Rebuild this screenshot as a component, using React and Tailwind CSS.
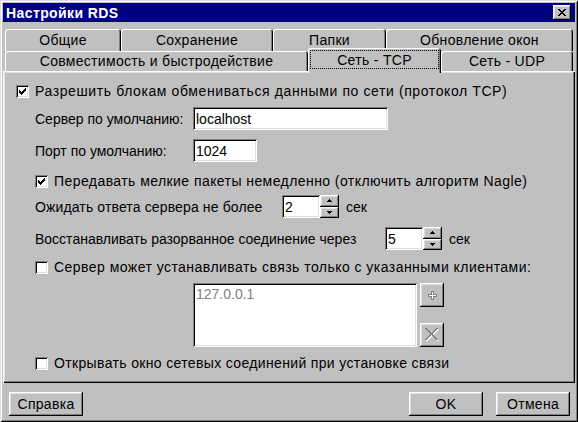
import React from "react";

const raised =
  "shadow-[inset_-1px_-1px_#000,inset_1px_1px_#fff,inset_-2px_-2px_#808080,inset_2px_2px_#dfdfdf]";
const sunken =
  "shadow-[inset_1px_1px_#808080,inset_-1px_-1px_#fff,inset_2px_2px_#000,inset_-2px_-2px_#dfdfdf]";
const tabShadow =
  "shadow-[inset_1px_1px_#fff,inset_-1px_0_#000,inset_-2px_0_#808080]";

function Pixels({ rows, colors }) {
  const w = rows[0].length;
  const h = rows.length;
  const rects = [];
  rows.forEach((r, y) =>
    [...r].forEach((c, x) => {
      if (colors[c])
        rects.push(
          <rect key={`${x}-${y}`} x={x} y={y} width="1" height="1" fill={colors[c]} />
        );
    })
  );
  return (
    <svg width={w} height={h} viewBox={`0 0 ${w} ${h}`} shapeRendering="crispEdges">
      {rects}
    </svg>
  );
}

const CHECK = [
  "......k",
  ".....kk",
  "k...kkk",
  "kk.kkk.",
  "kkkkk..",
  ".kkk...",
  "..k....",
];

const CLOSE = [
  "kk....kk",
  ".kk..kk.",
  "..kkkk..",
  "...kk...",
  "..kkkk..",
  ".kk..kk.",
  "kk....kk",
];

const UP = ["..k..", ".kkk.", "kkkkk"];
const DOWN = ["kkkkk", ".kkk.", "..k.."];

const PLUS = [
  "...ggg...",
  "...gwg...",
  "...gwg...",
  "ggggwgggg",
  "gwwwwwwwg",
  "ggggwgggg",
  "...gwg...",
  "...gwg...",
  "...ggg...",
];

const K = { k: "#000" };

function Check({ checked }) {
  return (
    <span className={`w-[13px] h-[13px] shrink-0 bg-white flex items-center justify-center ${sunken}`}>
      {checked && <Pixels rows={CHECK} colors={K} />}
    </span>
  );
}

function XIcon() {
  const rects = [];
  for (let i = 0; i < 12; i++) {
    rects.push(<rect key={`w1${i}`} x={i + 1} y={i + 1} width="2" height="1" fill="#fff" />);
    rects.push(<rect key={`w2${i}`} x={12 - i} y={i + 1} width="2" height="1" fill="#fff" />);
  }
  for (let i = 0; i < 12; i++) {
    rects.push(<rect key={`g1${i}`} x={i} y={i} width="2" height="1" fill="#808080" />);
    rects.push(<rect key={`g2${i}`} x={11 - i} y={i} width="2" height="1" fill="#808080" />);
  }
  return (
    <svg width="15" height="14" viewBox="0 0 15 14" shapeRendering="crispEdges">
      {rects}
    </svg>
  );
}

function Field({ w, h = "h-[23px]", children, muted }) {
  return (
    <div className={`${w} ${h} bg-white ${sunken} flex items-center pl-[3px] ${muted ? "text-[#808080]" : ""}`}>
      {children}
    </div>
  );
}

function Spin({ w, value }) {
  return (
    <div className="flex h-[23px]">
      <Field w={w}>{value}</Field>
      <div className="w-[19px] h-full flex flex-col">
        <div className={`flex-1 ${raised} flex items-center justify-center`}>
          <Pixels rows={UP} colors={K} />
        </div>
        <div className={`flex-1 ${raised} flex items-center justify-center`}>
          <Pixels rows={DOWN} colors={K} />
        </div>
      </div>
    </div>
  );
}

function Tab({ w, h, children }) {
  return (
    <div className={`${w} ${h} shrink-0 flex items-center justify-center rounded-t-[3px] tracking-[0.3px] ${tabShadow}`}>
      {children}
    </div>
  );
}

function Button({ children }) {
  return (
    <div className={`w-[74px] h-[24px] flex items-center justify-center tracking-[0.3px] ${raised}`}>{children}</div>
  );
}

export default function App() {
  return (
    <div
      className={`w-[578px] h-[422px] bg-[#c0c0c0] p-[3px] flex flex-col text-[14px] leading-[16px] text-black font-['Liberation_Sans',Arial,sans-serif] shadow-[inset_1px_1px_#dfdfdf,inset_-1px_-1px_#000,inset_2px_2px_#fff,inset_-2px_-2px_#808080]`}
    >
      {/* Title bar */}
      <div className="h-[19px] shrink-0 bg-[#000080] flex items-center pl-[3px] pr-[4px]">
        <span className="text-white font-bold tracking-[0.4px]">Настройки RDS</span>
        <div className={`ml-auto w-[18px] h-[15px] bg-[#c0c0c0] ${raised} flex items-center justify-center`}>
          <Pixels rows={CLOSE} colors={K} />
        </div>
      </div>

      {/* Tabs row 1 */}
      <div className="mt-[7px] h-[22px] shrink-0 flex mx-[2px]">
        <Tab w="w-[116px]" h="h-[22px]">Общие</Tab>
        <Tab w="w-[152px]" h="h-[22px]">Сохранение</Tab>
        <Tab w="w-[113px]" h="h-[22px]">Папки</Tab>
        <Tab w="w-[187px]" h="h-[22px]">Обновление окон</Tab>
      </div>

      {/* Tabs row 2 */}
      <div className="h-[20px] shrink-0 flex items-end mx-[2px]">
        <Tab w="w-[303px]" h="h-[20px]">Совместимость и быстродействие</Tab>
        <div
          className={`relative z-10 w-[133px] h-[25px] -mb-[2px] shrink-0 bg-[#c0c0c0] rounded-t-[3px] px-[2px] pt-[2px] pb-[4px] flex tracking-[0.3px] ${tabShadow}`}
        >
          <div className="flex-1 flex items-center justify-center border border-dotted border-black">
            Сеть - TCP
          </div>
        </div>
        <Tab w="w-[132px]" h="h-[20px]">Сеть - UDP</Tab>
      </div>

      {/* Panel */}
      <div
        className={`h-[312px] shrink-0 flex flex-col pt-[11px] shadow-[inset_1px_1px_#fff,inset_-1px_-1px_#000,inset_-2px_-2px_#808080,inset_2px_2px_#dfdfdf]`}
      >
        <div className="h-[18px] flex items-center pl-[13px]">
          <Check checked />
          <span className="ml-[6px] tracking-[0.6px]">Разрешить блокам обмениваться данными по сети (протокол TCP)</span>
        </div>

        <div className="mt-[7px] h-[23px] flex items-center pl-[32px]">
          <span className="w-[158px]">Сервер по умолчанию:</span>
          <Field w="w-[195px]">localhost</Field>
        </div>

        <div className="mt-[9px] h-[23px] flex items-center pl-[32px]">
          <span className="w-[158px]">Порт по умолчанию:</span>
          <Field w="w-[64px]">1024</Field>
        </div>

        <div className="mt-[10px] h-[18px] flex items-center pl-[32px]">
          <Check checked />
          <span className="ml-[6px] tracking-[0.43px]">Передавать мелкие пакеты немедленно (отключить алгоритм Nagle)</span>
        </div>

        <div className="mt-[5px] h-[23px] flex items-center pl-[32px]">
          <span className="w-[247px] tracking-[0.13px]">Ожидать ответа сервера не более</span>
          <Spin w="w-[38px]" value="2" />
          <span className="ml-[7px]">сек</span>
        </div>

        <div className="mt-[9px] h-[23px] flex items-center pl-[32px]">
          <span className="w-[350px]">Восстанавливать разорванное соединение через</span>
          <Spin w="w-[38px]" value="5" />
          <span className="ml-[7px]">сек</span>
        </div>

        <div className="mt-[8px] h-[18px] flex items-center pl-[32px]">
          <Check />
          <span className="ml-[6px] tracking-[0.46px]">Сервер может устанавливать связь только с указанными клиентами:</span>
        </div>

        <div className="mt-[7px] h-[64px] flex pl-[190px]">
          <div className={`w-[224px] h-full bg-white ${sunken} pl-[3px] pt-[3px] text-[#808080]`}>127.0.0.1</div>
          <div className="ml-[3px] h-full flex flex-col justify-between">
            <div className={`w-[24px] h-[24px] ${raised} flex items-center justify-center`}>
              <Pixels rows={PLUS} colors={{ g: "#808080", w: "#fff" }} />
            </div>
            <div className={`w-[24px] h-[24px] ${raised} flex items-center justify-center`}>
              <XIcon />
            </div>
          </div>
        </div>

        <div className="mt-[7px] h-[18px] flex items-center pl-[32px]">
          <Check />
          <span className="ml-[6px] tracking-[0.35px]">Открывать окно сетевых соединений при установке связи</span>
        </div>
      </div>

      {/* Bottom buttons */}
      <div className="mt-[9px] h-[24px] shrink-0 flex pl-[6px] pr-[5px]">
        <Button>Справка</Button>
        <div className="flex-1" />
        <Button>OK</Button>
        <div className="w-[13px]" />
        <Button>Отмена</Button>
      </div>
    </div>
  );
}
